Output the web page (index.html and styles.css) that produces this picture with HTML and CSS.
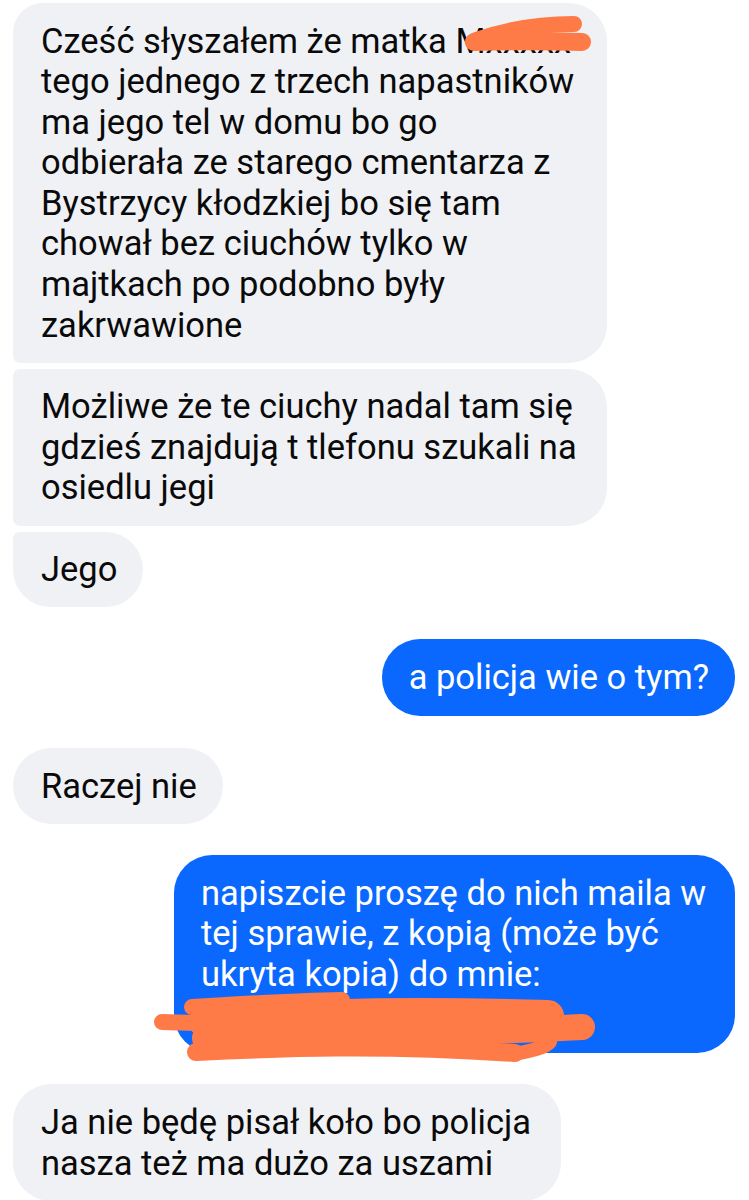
FILE: index.html
```html
<!DOCTYPE html>
<html lang="pl">
<head>
<meta charset="utf-8">
<title>Rozmowa</title>
<link rel="stylesheet" href="styles.css">
</head>
<body>
<main class="chat">
  <div class="group in">
    <p class="msg recv first">Cześć słyszałem że matka Mxxxxx tego jednego z trzech napastników ma jego tel w domu bo go odbierała ze starego cmentarza z Bystrzycy kłodzkiej bo się tam chował bez ciuchów tylko w majtkach po podobno były zakrwawione</p>
    <p class="msg recv mid">Możliwe że te ciuchy nadal tam się gdzieś znajdują t tlefonu szukali na osiedlu jegi</p>
    <p class="msg recv last">Jego</p>
  </div>
  <div class="group out">
    <p class="msg sent">a policja wie o tym?</p>
  </div>
  <div class="group in">
    <p class="msg recv">Raczej nie</p>
  </div>
  <div class="group out">
    <p class="msg sent narrow">napiszcie proszę do nich maila w tej sprawie, z kopią (może być ukryta kopia) do mnie: xxxxxx@xxxxx.xx</p>
  </div>
  <div class="group in">
    <p class="msg recv compact">Ja nie będę pisał koło bo policja nasza też ma dużo za uszami</p>
  </div>
</main>
<svg class="redact" width="749" height="1200" viewBox="0 0 749 1200" aria-hidden="true">
  <g fill="none" stroke="#fe7a46" stroke-linecap="round" stroke-linejoin="round">
    <path d="M476 40 C 505 30, 535 24, 574 24" stroke-width="16"/>
    <path d="M474 42 C 510 41, 550 41, 582 42" stroke-width="18"/>
    <path d="M162 1022 C 200 1023, 230 1025, 270 1025" stroke-width="16"/>
    <path d="M192 1007 C 240 1004, 290 1001, 342 1000" stroke-width="16"/>
    <path d="M205 1022 C 300 1014, 420 1012, 548 1016" stroke-width="32"/>
    <path d="M205 1038 C 320 1034, 460 1034, 582 1027" stroke-width="26"/>
    <path d="M196 1052 C 280 1048, 380 1044, 515 1053" stroke-width="18"/>
    <path d="M515 1054 C 530 1051, 545 1048, 550 1042" stroke-width="14"/>
  </g>
</svg>
</body>
</html>
```

FILE: styles.css
```css
html, body {
  margin: 0;
  padding: 0;
  background: #ffffff;
}

body {
  position: relative;
  width: 749px;
  height: 1200px;
  overflow: hidden;
  font-family: Roboto, "Noto Sans", "Liberation Sans", sans-serif;
}

.chat {
  display: flex;
  flex-direction: column;
  gap: 31.7px;
  padding: 3px 14px 0 13px;
}

.group {
  display: flex;
  flex-direction: column;
  gap: 6px;
}

.group.in {
  align-items: flex-start;
}

.group.out {
  align-items: flex-end;
}

.msg {
  margin: 0;
  box-sizing: border-box;
  max-width: 594px;
  padding: 17.5px 26px 17.5px 28px;
  font-size: 34.5px;
  line-height: 40.6px;
  border-radius: 38px;
}

.recv {
  background: #f0f1f5;
  color: #0a0a0a;
}

.recv.first {
  border-top-left-radius: 30px;
  border-bottom-left-radius: 7px;
}

.recv.mid {
  border-top-left-radius: 7px;
  border-bottom-left-radius: 7px;
}

.recv.last {
  border-top-left-radius: 7px;
}

.recv.compact {
  max-width: 548px;
}

.sent {
  background: #0a68fe;
  color: #ffffff;
  padding: 18.5px 26px 18.5px 27px;
}

.sent.narrow {
  max-width: 561px;
  padding-top: 17.5px;
  padding-bottom: 17.5px;
}

.redact {
  position: absolute;
  top: 0;
  left: 0;
  pointer-events: none;
}
```
